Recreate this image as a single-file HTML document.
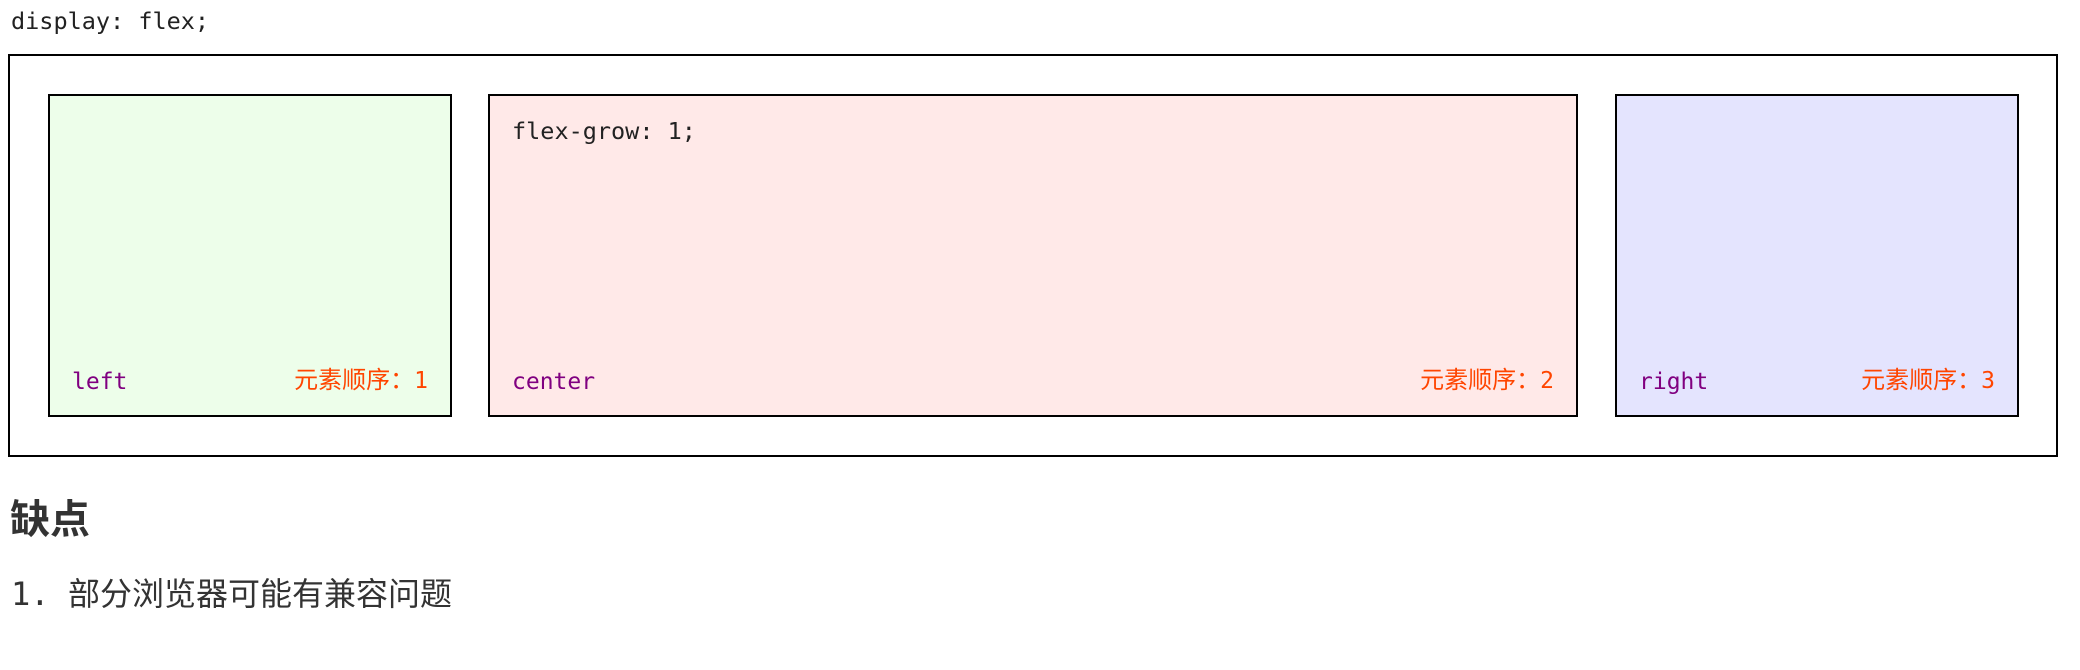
<!DOCTYPE html>
<html><head><meta charset="utf-8"><style>
body{margin:0;width:2080px;height:670px;background:#fff;position:relative;overflow:hidden;font-family:"DejaVu Sans Mono","Liberation Mono","Noto Sans CJK SC",monospace;}
.abs{position:absolute}
.code{font-size:23.5px;color:#222;line-height:1}
.box{position:absolute;top:94px;height:319px;border:2px solid #000}
.lab{position:absolute;bottom:21px;font-size:23px;color:#800080;line-height:1}
.ord{position:absolute;bottom:22px;right:22px;font-size:24px;color:#ff4500;line-height:1;font-family:"Noto Sans CJK SC",sans-serif;white-space:nowrap}
.ord b{font-weight:normal;font-family:"DejaVu Sans Mono",monospace;font-size:23px}
</style></head><body>
<div class="abs code" style="left:11px;top:10px">display: flex;</div>
<div class="abs" style="left:8px;top:54px;width:2046px;height:399px;border:2px solid #000"></div>
<div class="box" style="left:48px;width:400px;background:#edfeea">
  <div class="lab" style="left:22px">left</div>
  <div class="ord">元素顺序：<b>1</b></div>
</div>
<div class="box" style="left:488px;width:1086px;background:#ffe9e8">
  <div class="abs code" style="left:22px;top:24px">flex-grow: 1;</div>
  <div class="lab" style="left:22px">center</div>
  <div class="ord">元素顺序：<b>2</b></div>
</div>
<div class="box" style="left:1615px;width:400px;background:#e4e4fe">
  <div class="lab" style="left:22px">right</div>
  <div class="ord">元素顺序：<b>3</b></div>
</div>
<div class="abs" style="left:10px;top:496px;font-size:40px;font-weight:bold;color:#333;font-family:'Liberation Sans','Noto Sans CJK SC',sans-serif;line-height:1.2">缺点</div>
<div class="abs" style="left:11px;top:575px;font-size:32px;color:#333;line-height:1.2;font-family:'Liberation Sans','Noto Sans CJK SC',sans-serif"><span style="font-family:'DejaVu Sans Mono',monospace;font-size:32px">1.</span><span style="position:absolute;left:57px;white-space:nowrap">部分浏览器可能有兼容问题</span></div>
</body></html>
